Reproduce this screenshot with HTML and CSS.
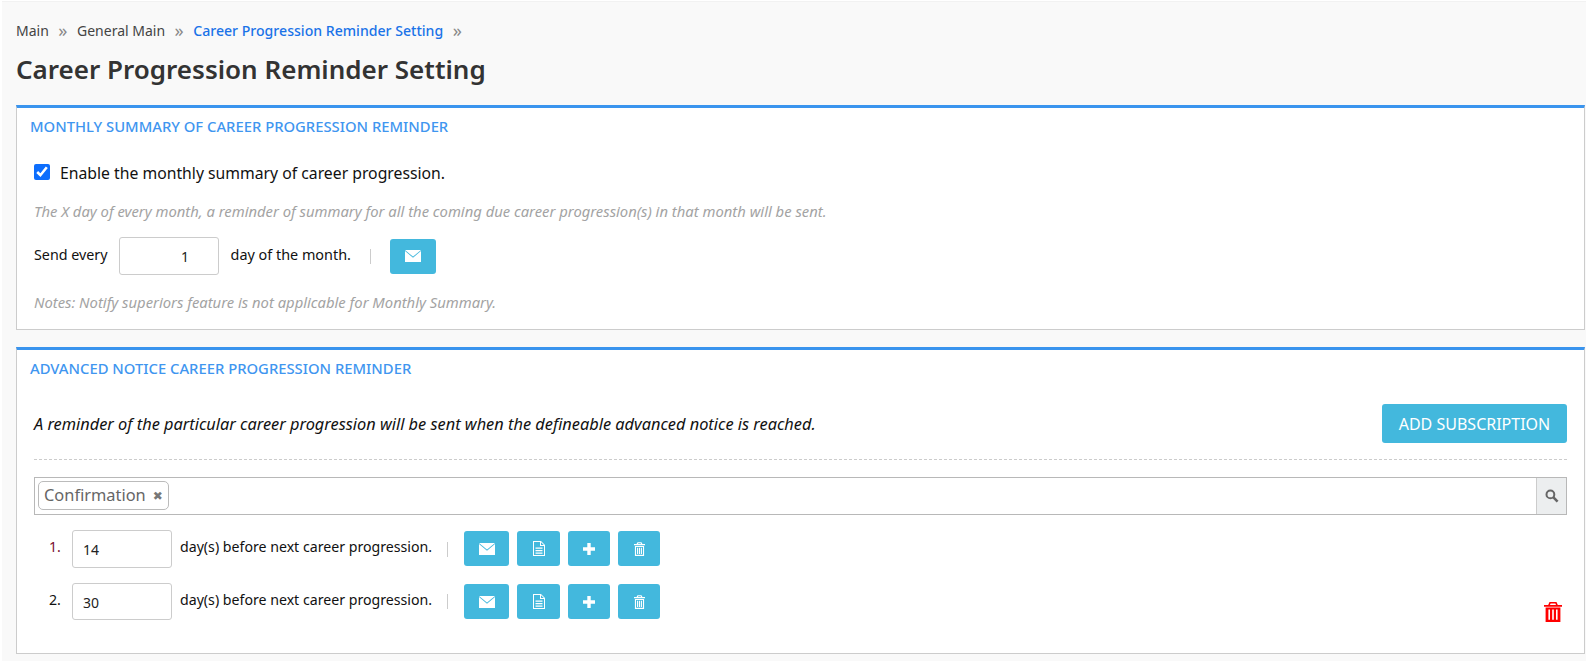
FILE: index.html
```html
<!DOCTYPE html>
<html lang="en">
<head>
<meta charset="utf-8">
<title>Career Progression Reminder Setting</title>
<link rel="stylesheet" href="styles.css">
</head>
<body>
<svg class="defs" width="0" height="0" aria-hidden="true">
  <symbol id="i-mail" viewBox="0 0 16 12"><path d="M0 0h16L8 6.6z"/><path d="M0 1.1V12h16V1.1L8 7.7z"/></symbol>
  <symbol id="i-file" viewBox="0 0 12 15"><path fill-rule="evenodd" d="M0 0h8l4 4v11H0zM1 1v13h10V5H7V1zM8 1.2V4h2.8z"/><path d="M2.5 6.5h7v1.2h-7zM2.5 9h7v1.2h-7zM2.5 11.5h7v1.2h-7z"/></symbol>
  <symbol id="i-plus" viewBox="0 0 12 12"><path d="M4.3 0h3.4v4.3H12v3.4H7.7V12H4.3V7.7H0V4.3h4.3z"/></symbol>
  <symbol id="i-trash" viewBox="0 0 12 15"><path fill-rule="evenodd" d="M3.8 0h4.4l1 2H12v1.4H0V2h2.8zM4.7 1.1 4.3 2h3.4l-.4-.9zM1 4.3h10V15H1zM2.2 5.4v8.4h7.6V5.4z"/><path d="M3.3 6.2h1.2v6.8H3.3zM5.4 6.2h1.2v6.8H5.4zM7.5 6.2h1.2v6.8H7.5z"/></symbol>
  <symbol id="i-bin" viewBox="0 0 18 20"><path fill-rule="evenodd" d="M5.5 0h7l1.3 3H18v1.8H0V3h4.2zM6.6 1.4 6 3h6l-.6-1.6zM1.6 5.6h14.8V20H1.6zM4.4 7.4v10.4h1.6V7.4zM8.2 7.4v10.4h1.6V7.4zM12 7.4v10.4h1.6V7.4z"/></symbol>
</svg>
<main class="page">
  <nav class="crumbs">
    <span>Main</span><span class="sep">»</span>
    <span>General Main</span><span class="sep">»</span>
    <a class="current">Career Progression Reminder Setting</a><span class="sep">»</span>
  </nav>
  <h1 class="title">Career Progression Reminder Setting</h1>

  <section class="card card-first">
    <h2 class="card-title">MONTHLY SUMMARY OF CAREER PROGRESSION REMINDER</h2>
    <label class="check"><input type="checkbox" checked><span>Enable the monthly summary of career progression.</span></label>
    <p class="hint hint-top">The X day of every month, a reminder of summary for all the coming due career progression(s) in that month will be sent.</p>
    <div class="send-row">
      <span class="send-label">Send every</span>
      <input class="field field-send" value="1">
      <span class="send-after">day of the month.</span>
      <span class="divider"></span>
      <button class="btn icon-btn w46"><svg class="ic-mail"><use href="#i-mail"/></svg></button>
    </div>
    <p class="hint hint-bottom">Notes: Notify superiors feature is not applicable for Monthly Summary.</p>
  </section>

  <section class="card card-second">
    <h2 class="card-title">ADVANCED NOTICE CAREER PROGRESSION REMINDER</h2>
    <div class="notice-row">
      <p class="notice">A reminder of the particular career progression will be sent when the defineable advanced notice is reached.</p>
      <button class="btn add-btn">ADD SUBSCRIPTION</button>
    </div>
    <div class="token-box">
      <div class="token-area"><span class="token"><span class="token-text">Confirmation</span><span class="token-x">✖</span></span></div>
      <span class="search"><svg viewBox="0 0 14 14" width="14" height="14"><circle cx="5.4" cy="5.4" r="3.9" fill="none" stroke="#666" stroke-width="2"/><path d="M8.2 8.2 12.6 12.6" stroke="#666" stroke-width="2.6"/></svg></span>
    </div>
    <div class="sub-row">
      <span class="num num-first">1.</span>
      <input class="field field-day" value="14">
      <span class="day-text">day(s) before next career progression.</span>
      <span class="divider"></span>
      <div class="actions">
        <button class="btn icon-btn w45"><svg class="ic-mail"><use href="#i-mail"/></svg></button>
        <button class="btn icon-btn w43"><svg class="ic-file"><use href="#i-file"/></svg></button>
        <button class="btn icon-btn w42"><svg class="ic-plus"><use href="#i-plus"/></svg></button>
        <button class="btn icon-btn w42"><svg class="ic-trash"><use href="#i-trash"/></svg></button>
      </div>
    </div>
    <div class="sub-row">
      <span class="num">2.</span>
      <input class="field field-day" value="30">
      <span class="day-text">day(s) before next career progression.</span>
      <span class="divider"></span>
      <div class="actions">
        <button class="btn icon-btn w45"><svg class="ic-mail"><use href="#i-mail"/></svg></button>
        <button class="btn icon-btn w43"><svg class="ic-file"><use href="#i-file"/></svg></button>
        <button class="btn icon-btn w42"><svg class="ic-plus"><use href="#i-plus"/></svg></button>
        <button class="btn icon-btn w42"><svg class="ic-trash"><use href="#i-trash"/></svg></button>
      </div>
    </div>
    <svg class="bin"><use href="#i-bin"/></svg>
  </section>
</main>
</body>
</html>
```
FILE: styles.css
```css
* { box-sizing: border-box; }
html, body { margin: 0; padding: 0; height: 100%; }
body {
  background: #fff;
  font-family: "Noto Sans", "Open Sans", sans-serif;
  color: #111;
  overflow: hidden;
}
.defs { position: absolute; }
.page {
  margin: 1px 0 0 2px;
  padding: 0 1px 0 14px;
  height: 660px;
  background: #f9f9f9;
  border-top: 1px solid #f2f2f2;
}
.crumbs {
  display: flex;
  align-items: center;
  height: 20px;
  margin-top: 18px;
  font-size: 14px;
  color: #444;
}
.sep { margin: 0 9.5px; color: #888; font-size: 18px; line-height: 20px; }
.current { color: #1a73e8; font-size: 14.1px; font-weight: 500; }
.title {
  margin: 11px 0 0;
  font-size: 26px;
  line-height: 36px;
  font-weight: 600;
  color: #333;
}
.card {
  position: relative;
  background: #fff;
  border: 1px solid #ccc;
  border-top: 3px solid #3a94ee;
  padding: 0 14px 0 13px;
}
.card-first { margin-top: 18px; height: 225px; }
.card-second { margin-top: 17px; height: 307px; }
.card-title {
  margin: 8px 0 0;
  font-size: 14.8px;
  line-height: 20px;
  font-weight: 500;
  color: #3f96f0;
}
.check {
  display: flex;
  align-items: center;
  margin: 25px 0 0 4px;
  height: 24px;
  font-size: 15.75px;
  color: #111;
}
.check input { width: 16px; height: 16px; margin: 0 10px 2px 0; accent-color: #0d6efd; }
.hint { margin: 0 0 0 4px; font-size: 14.8px; line-height: 20px; font-style: italic; color: #a3a3a3; }
.hint-top { margin-top: 16px; }
.hint-bottom { margin-top: 17px; }
.send-row { display: flex; align-items: center; margin: 16px 0 0 4px; height: 38px; font-size: 14.3px; }
.send-label { margin-bottom: 3px; }
.field {
  height: 38px;
  border: 1px solid #ccc;
  border-radius: 3px;
  font: 14px "Noto Sans", sans-serif;
  color: #222;
  background: #fff;
  padding: 0;
}
.field-send { width: 100px; margin-left: 11px; text-align: center; padding-left: 33px; padding-top: 1px; }
.send-after { margin-left: 12px; margin-bottom: 3px; font-size: 14.4px; }
.divider { width: 1px; height: 15px; background: #ccc; margin: 0 19px; }
.btn { border: 0; background: #43b8dd; color: #fff; border-radius: 3px; padding: 0; font: inherit; }
.icon-btn { display: flex; align-items: center; justify-content: center; height: 35px; fill: #fff; }
.w46 { width: 46px; }
.w45 { width: 45px; }
.w43 { width: 43px; }
.w42 { width: 42px; }
.ic-mail { width: 16px; height: 12px; }
.ic-file { width: 12px; height: 15px; }
.ic-plus { width: 12px; height: 12px; }
.ic-trash { width: 11px; height: 14px; }
.notice-row {
  display: flex;
  justify-content: space-between;
  align-items: center;
  margin: 26px 3px 0 4px;
  padding: 0 0 16px 0;
  border-bottom: 1px dashed #ccc;
}
.notice { margin: 0; font-size: 16.35px; font-style: italic; color: #111; }
.add-btn { width: 185px; height: 39px; font-size: 16px; }
.token-box {
  display: flex;
  margin: 17px 3px 0 4px;
  height: 38px;
  border: 1px solid #b8b8b8;
}
.token-area { flex: 1; padding: 3px 0 0 3px; }
.token {
  display: inline-flex;
  align-items: center;
  height: 29px;
  padding: 0 5px 0 5px;
  border: 1px solid #bbb;
  border-radius: 5px;
  font-size: 16.4px;
  color: #666;
}
.token-text { margin-bottom: 2px; }
.token-x { margin-left: 7px; font-size: 12px; font-weight: 700; color: #777; font-family: "DejaVu Sans", sans-serif; }
.search { width: 30px; display: flex; align-items: center; justify-content: center; background: #eceeef; border-left: 1px solid #ccc; }
.sub-row { display: flex; align-items: center; margin: 15px 0 0 4px; height: 38px; font-size: 14.17px; }
.sub-row + .sub-row { height: 37px; }
.num { width: 33px; padding-left: 15px; margin-bottom: 5px; }
.num-first { color: #7a1030; }
.field-day { width: 100px; padding-left: 10px; padding-top: 1px; margin-left: 5px; height: 100%; }
.day-text { margin-left: 8px; margin-bottom: 5px; }
.actions { display: flex; gap: 8px; margin-left: 1px; align-self: flex-start; margin-top: 1px; }
.sub-row .divider { margin: 0 15px; }
.bin { position: absolute; right: 22px; bottom: 31px; width: 18px; height: 20px; fill: #f00; }
```
